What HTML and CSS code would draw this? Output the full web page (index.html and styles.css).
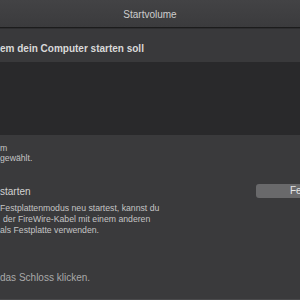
FILE: index.html
```html
<!DOCTYPE html>
<html lang="de">
<head>
<meta charset="utf-8">
<link rel="stylesheet" href="styles.css">
</head>
<body>
<div class="window">
  <div class="titlebar">Startvolume</div>
  <div class="header">em dein Computer starten soll</div>
  <div class="list"></div>
  <div class="panel">
    <div class="note">
      <div>m</div>
      <div>gewählt.</div>
    </div>
    <div class="startrow">
      <span class="subhead">starten</span>
      <span class="button">Festplattenmodus</span>
    </div>
    <div class="desc">
      <div>Festplattenmodus neu startest, kannst du</div>
      <div class="indent">der FireWire-Kabel mit einem anderen</div>
      <div>als Festplatte verwenden.</div>
    </div>
    <div class="lock">das Schloss klicken.</div>
  </div>
</div>
</body>
</html>
```

FILE: styles.css
```css
html, body {
  margin: 0;
  padding: 0;
  width: 300px;
  height: 300px;
  overflow: hidden;
  background: #3a3a3c;
  font-family: "Liberation Sans", Arial, sans-serif;
}
.window {
  width: 300px;
  height: 300px;
  display: flex;
  flex-direction: column;
}
.titlebar {
  height: 27px;
  flex: none;
  display: flex;
  align-items: center;
  justify-content: center;
  font-size: 10px;
  color: #cdcdcd;
  background: linear-gradient(#434345, #3b3b3d);
  border-bottom: 1px solid #1c1c1c;
  padding-top: 2px;
  box-sizing: border-box;
  height: 28px;
}
.header {
  height: 34px;
  flex: none;
  box-sizing: border-box;
  padding-top: 14px;
  line-height: 12px;
  font-size: 10px;
  font-weight: bold;
  color: #d9d9d9;
  background: #39393b;
  border-top: 1px solid #2e2e30;
  white-space: nowrap;
}
.list {
  height: 73px;
  flex: none;
  background: #29292b;
}
.panel {
  flex: 1;
  background: #3a3a3c;
  color: #c4c4c4;
  font-size: 8.7px;
  border-bottom: 1px solid #4a4a4c;
}
.note {
  padding-top: 8px;
  line-height: 10px;
}
.startrow {
  margin-top: 21px;
  height: 14px;
  display: flex;
  align-items: center;
  justify-content: space-between;
}
.subhead {
  font-size: 10px;
  color: #d2d2d2;
}
.button {
  width: 84px;
  height: 14px;
  margin-right: -40px;
  box-sizing: border-box;
  padding-left: 34px;
  line-height: 14px;
  font-size: 10px;
  color: #e6e6e6;
  background: #69696b;
  border-radius: 3px;
  white-space: nowrap;
  overflow: hidden;
}
.desc {
  margin-top: 5px;
  line-height: 11px;
  white-space: nowrap;
}
.indent {
  padding-left: 3px;
}
.lock {
  margin-top: 36px;
  font-size: 10px;
  line-height: 12px;
  color: #a9a9a9;
}
```
